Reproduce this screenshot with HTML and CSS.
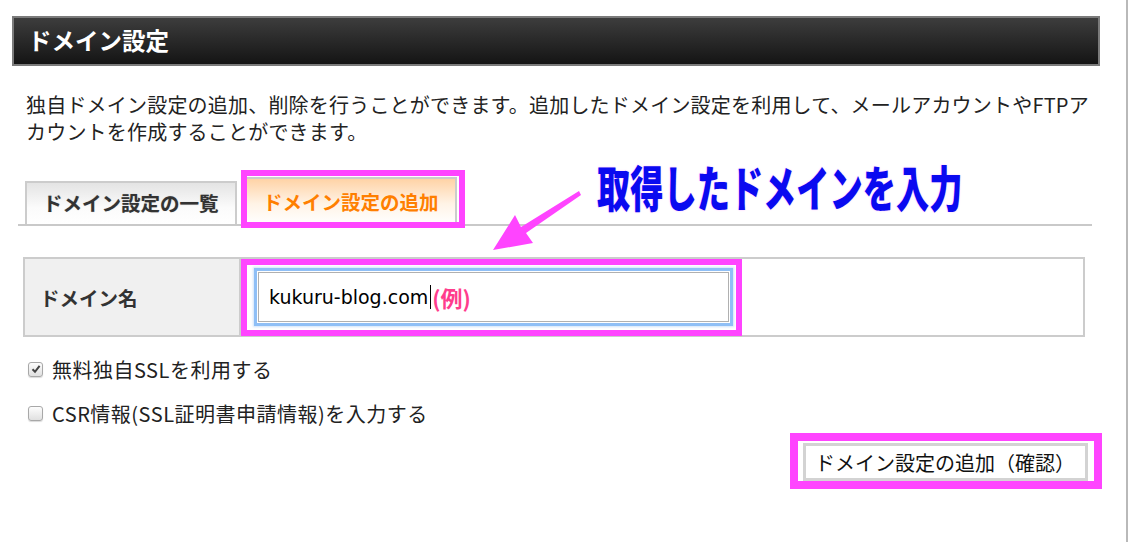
FILE: index.html
```html
<!DOCTYPE html>
<html>
<head>
	<title>ドメイン設定</title>
	<meta charset="utf-8">
	<link rel="stylesheet" href="styles.css">
</head>
<body>
	<div class="page">
		<h1 class="panel-title">ドメイン設定</h1>

		<p class="lead">独自ドメイン設定の追加、削除を行うことができます。追加したドメイン設定を利用して、メールアカウントやFTPア<br>カウントを作成することができます。</p>

		<div class="tabs">
			<a class="tab">ドメイン設定の一覧</a>
			<a class="tab active">ドメイン設定の追加</a>
		</div>

		<div class="form-row">
			<div class="form-label">ドメイン名</div>
			<div class="form-cell">
				<div class="field">
					<span class="value">kukuru-blog.com</span><span class="caret"></span><span class="example">(例)</span>
				</div>
			</div>
		</div>

		<label class="check">
			<span class="box checked">
				<svg width="10" height="10" viewBox="0 0 10 10"><path d="M1.5 5.2 L4 7.8 L8.6 1.8" fill="none" stroke="#444" stroke-width="2"/></svg>
			</span>
			無料独自SSLを利用する
		</label>
		<label class="check">
			<span class="box"></span>
			CSR情報(SSL証明書申請情報)を入力する
		</label>

		<div class="actions">
			<button class="btn">ドメイン設定の追加（確認）</button>
		</div>

		<!-- 注釈 -->
		<div class="mark mark-tab"></div>
		<div class="mark mark-input"></div>
		<div class="mark mark-btn"></div>
		<div class="note">取得したドメインを入力</div>
		<svg class="arrow" width="120" height="80" viewBox="0 0 120 80">
			<polygon points="13,70 35,35 41,47 99,11 101,15 46,53 53,63" fill="#ff44ff"/>
		</svg>
	</div>
</body>
</html>
```

FILE: styles.css
```css
html, body{
	margin: 0;
	overflow: hidden;
	background: #fff;
}
body{
	font-family: "Noto Sans CJK JP", sans-serif;
	color: #222;
}
.page{
	position: relative;
	width: 1128px;
	min-height: 542px;
	padding-top: 16px;
	box-sizing: border-box;
	border-right: 2px solid #b9b9b9;
}
.panel-title{
	margin: 0 0 0 12px;
	width: 1088px;
	height: 50px;
	box-sizing: border-box;
	border: 2px solid #7b7b7b;
	background: linear-gradient(#3d3d3d, #141414);
	color: #fff;
	font-size: 23.5px;
	font-weight: 700;
	line-height: 45px;
	padding-left: 14px;
}
.lead{
	margin: 25px 0 0 26px;
	font-size: 20px;
	line-height: 27px;
	letter-spacing: .2px;
	color: #222;
}

/* タブ */
.tabs{
	display: flex;
	align-items: flex-end;
	gap: 4px;
	margin: 32px 0 0 18px;
	padding-left: 7px;
	width: 1074px;
	box-sizing: border-box;
	border-bottom: 2px solid #c9c9c9;
}
.tab{
	display: block;
	box-sizing: border-box;
	width: 212px;
	height: 43px;
	border: 2px solid #cccccc;
	border-bottom: none;
	background: linear-gradient(#e4e4e4, #fbfbfb 60%, #fff);
	color: #333;
	font-size: 19.5px;
	font-weight: 700;
	line-height: 40px;
	padding-left: 16px;
	text-shadow: 0 0 1px rgba(0,0,0,.3);
}
.tab.active{
	width: 216px;
	height: 47px;
	line-height: 46px;
	padding-left: 20px;
	background: linear-gradient(#ffd3a6, #fff3e6 55%, #fff);
	color: #ff7f00;
	text-shadow: none;
}

/* フォーム */
.form-row{
	display: grid;
	grid-template-columns: 216px 1fr;
	margin: 31px 0 0 23px;
	width: 1062px;
	height: 80px;
	box-sizing: border-box;
	border: 2px solid #cccccc;
}
.form-label{
	display: flex;
	align-items: center;
	padding-left: 15px;
	background: #f0f0f0;
	border-right: 2px solid #cccccc;
	font-size: 19.5px;
	font-weight: 700;
	color: #333;
}
.form-cell{
	display: flex;
	align-items: center;
	padding-left: 17px;
}
.field{
	display: flex;
	align-items: center;
	width: 471px;
	height: 50px;
	box-sizing: border-box;
	border: 1px solid #b0b0b0;
	padding-left: 10px;
	box-shadow: 0 0 0 1px #fff, 0 0 0 4px #8fbff6, 0 0 2px 5px #cfe3fb;
	background: #fff;
}
.value{
	font-family: "DejaVu Sans", sans-serif;
	font-size: 19px;
	color: #000;
}
.caret{
	display: inline-block;
	width: 1px;
	height: 24px;
	background: #000;
	margin-left: 2px;
}
.example{
	font-size: 22px;
	font-weight: 700;
	color: #ff3d8c;
	margin-left: 1px;
}

/* チェックボックス */
.check{
	display: flex;
	align-items: center;
	height: 30px;
	margin-left: 28px;
	font-size: 20px;
	letter-spacing: .5px;
	color: #222;
}
.check:first-of-type{
	margin-top: 17px;
}
.check + .check{
	margin-top: 14px;
}
.box{
	display: flex;
	align-items: center;
	justify-content: center;
	width: 15px;
	height: 15px;
	box-sizing: border-box;
	margin-right: 9px;
	border: 1px solid #a8a8a8;
	border-radius: 3px;
	background: linear-gradient(#fdfdfd, #e0e0e0);
	box-shadow: 0 1px 1px rgba(0,0,0,.15);
}

/* ボタン */
.actions{
	display: flex;
	justify-content: flex-end;
	width: 1088px;
	margin-top: 15px;
}
.btn{
	width: 285px;
	height: 38px;
	border: 3px solid #d3d3d3;
	background: #fff;
	font-family: "Noto Sans CJK JP", sans-serif;
	font-size: 20px;
	color: #111;
	text-align: left;
	padding: 0 0 0 9px;
}

/* 注釈 */
.mark{
	position: absolute;
	box-sizing: border-box;
	border: 6px solid #ff44ff;
}
.mark-tab{
	left: 241px;
	top: 170px;
	width: 224px;
	height: 58px;
}
.mark-input{
	left: 241px;
	top: 259px;
	width: 501px;
	height: 77px;
}
.mark-btn{
	left: 790px;
	top: 433px;
	width: 312px;
	height: 56px;
	border-width: 8px;
}
.note{
	position: absolute;
	left: 597px;
	top: 164px;
	font-size: 44px;
	line-height: 44px;
	font-weight: 900;
	color: #0a0af0;
	white-space: nowrap;
	transform: scale(.755, 1.1);
	transform-origin: left center;
	text-shadow: 0 0 2px #ffb3ff;
}
.arrow{
	position: absolute;
	left: 480px;
	top: 180px;
}
```
